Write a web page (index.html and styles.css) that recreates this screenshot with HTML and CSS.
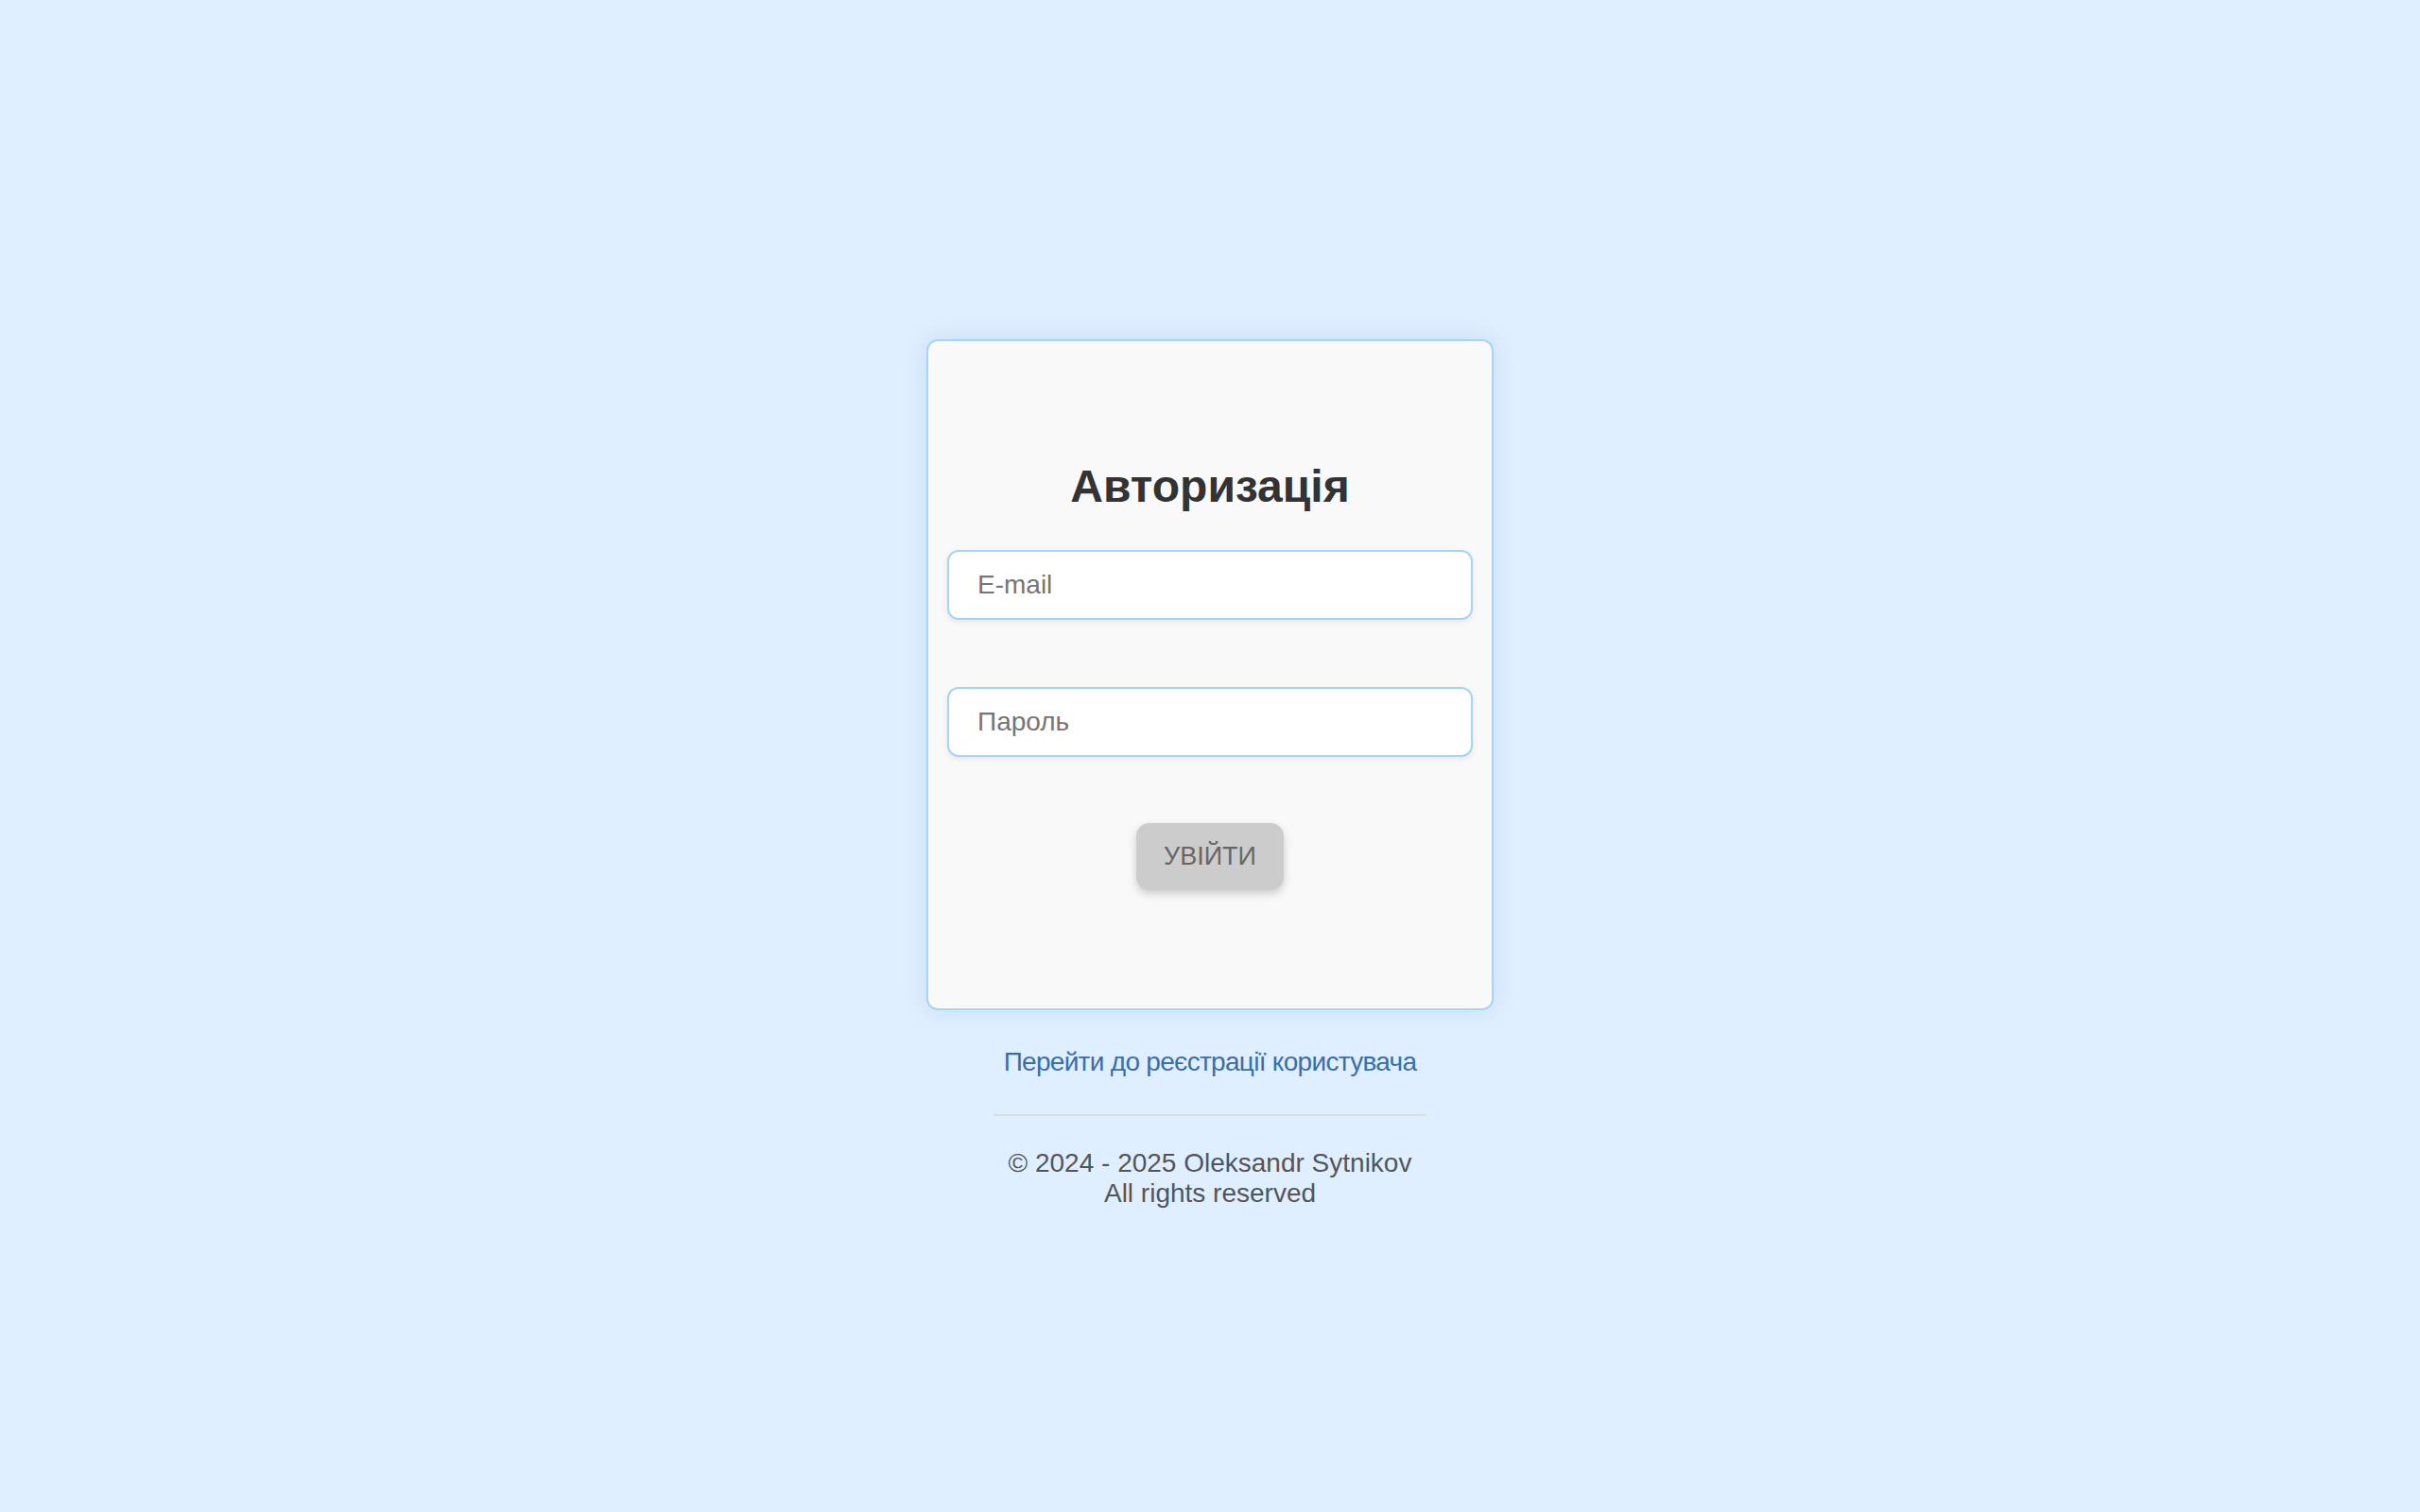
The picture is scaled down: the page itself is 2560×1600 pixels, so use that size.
FILE: index.html
```html
<!DOCTYPE html>
<html lang="uk">
<head>
<meta charset="utf-8">
<title>Авторизація</title>
<link rel="stylesheet" href="styles.css">
</head>
<body>
<div class="page">
  <form class="card">
    <h2 class="title">Авторизація</h2>
    <input class="field field-email" type="email" placeholder="E-mail">
    <input class="field field-pass" type="password" placeholder="Пароль">
    <button class="submit" type="button">УВІЙТИ</button>
  </form>
  <a class="reg-link" href="#">Перейти до реєстрації користувача</a>
  <hr class="divider">
  <footer class="footer">
    <div>© 2024 - 2025 Oleksandr Sytnikov</div>
    <div>All rights reserved</div>
  </footer>
</div>
</body>
</html>
```
FILE: styles.css
```css
html, body {
  margin: 0;
  padding: 0;
}
body {
  background: #e0efff;
  font-family: "Liberation Sans", Arial, Helvetica, sans-serif;
  min-height: 1600px;
}
.page {
  display: flex;
  flex-direction: column;
  align-items: center;
  padding-top: 359px;
}
.card {
  box-sizing: border-box;
  width: 600px;
  display: flex;
  flex-direction: column;
  padding: 126px 20px 125px;
  background: #f9f9f9;
  border: 2px solid #a8d4f6;
  border-radius: 12px;
  box-shadow: 0 0 24px rgba(110, 160, 220, 0.22);
  margin: 0;
}
.title {
  margin: 0 0 40px;
  font-size: 48px;
  line-height: 55px;
  font-weight: bold;
  color: #333333;
  text-align: center;
}
.field {
  box-sizing: border-box;
  width: 100%;
  height: 74px;
  padding: 0 30px;
  border: 2px solid #a8d4f6;
  border-radius: 12px;
  background: #ffffff;
  font-family: "Liberation Sans", Arial, Helvetica, sans-serif;
  font-size: 28px;
  color: #333;
  outline: none;
  box-shadow: 0 2px 6px rgba(0, 0, 0, 0.08);
}
.field::placeholder {
  color: #757575;
}
.field-email {
  margin-bottom: 71px;
}
.field-pass {
  margin-bottom: 70px;
}
.submit {
  align-self: center;
  width: 156px;
  height: 71px;
  border: none;
  border-radius: 14px;
  background: #cccccc;
  color: #666666;
  font-family: "Liberation Sans", Arial, Helvetica, sans-serif;
  font-size: 27px;
  box-shadow: 0 4px 10px rgba(0, 0, 0, 0.18);
  padding: 0;
}
.reg-link {
  margin-top: 39px;
  font-size: 28px;
  line-height: 32px;
  letter-spacing: -0.7px;
  color: #3a6ea8;
  text-decoration: none;
}
.divider {
  width: 458px;
  height: 0;
  margin: 39px 0 0;
  border: none;
  border-top: 2px solid #dcdcdc;
}
.footer {
  margin-top: 34px;
  font-size: 28px;
  line-height: 32px;
  color: #555555;
  text-align: center;
}
```
